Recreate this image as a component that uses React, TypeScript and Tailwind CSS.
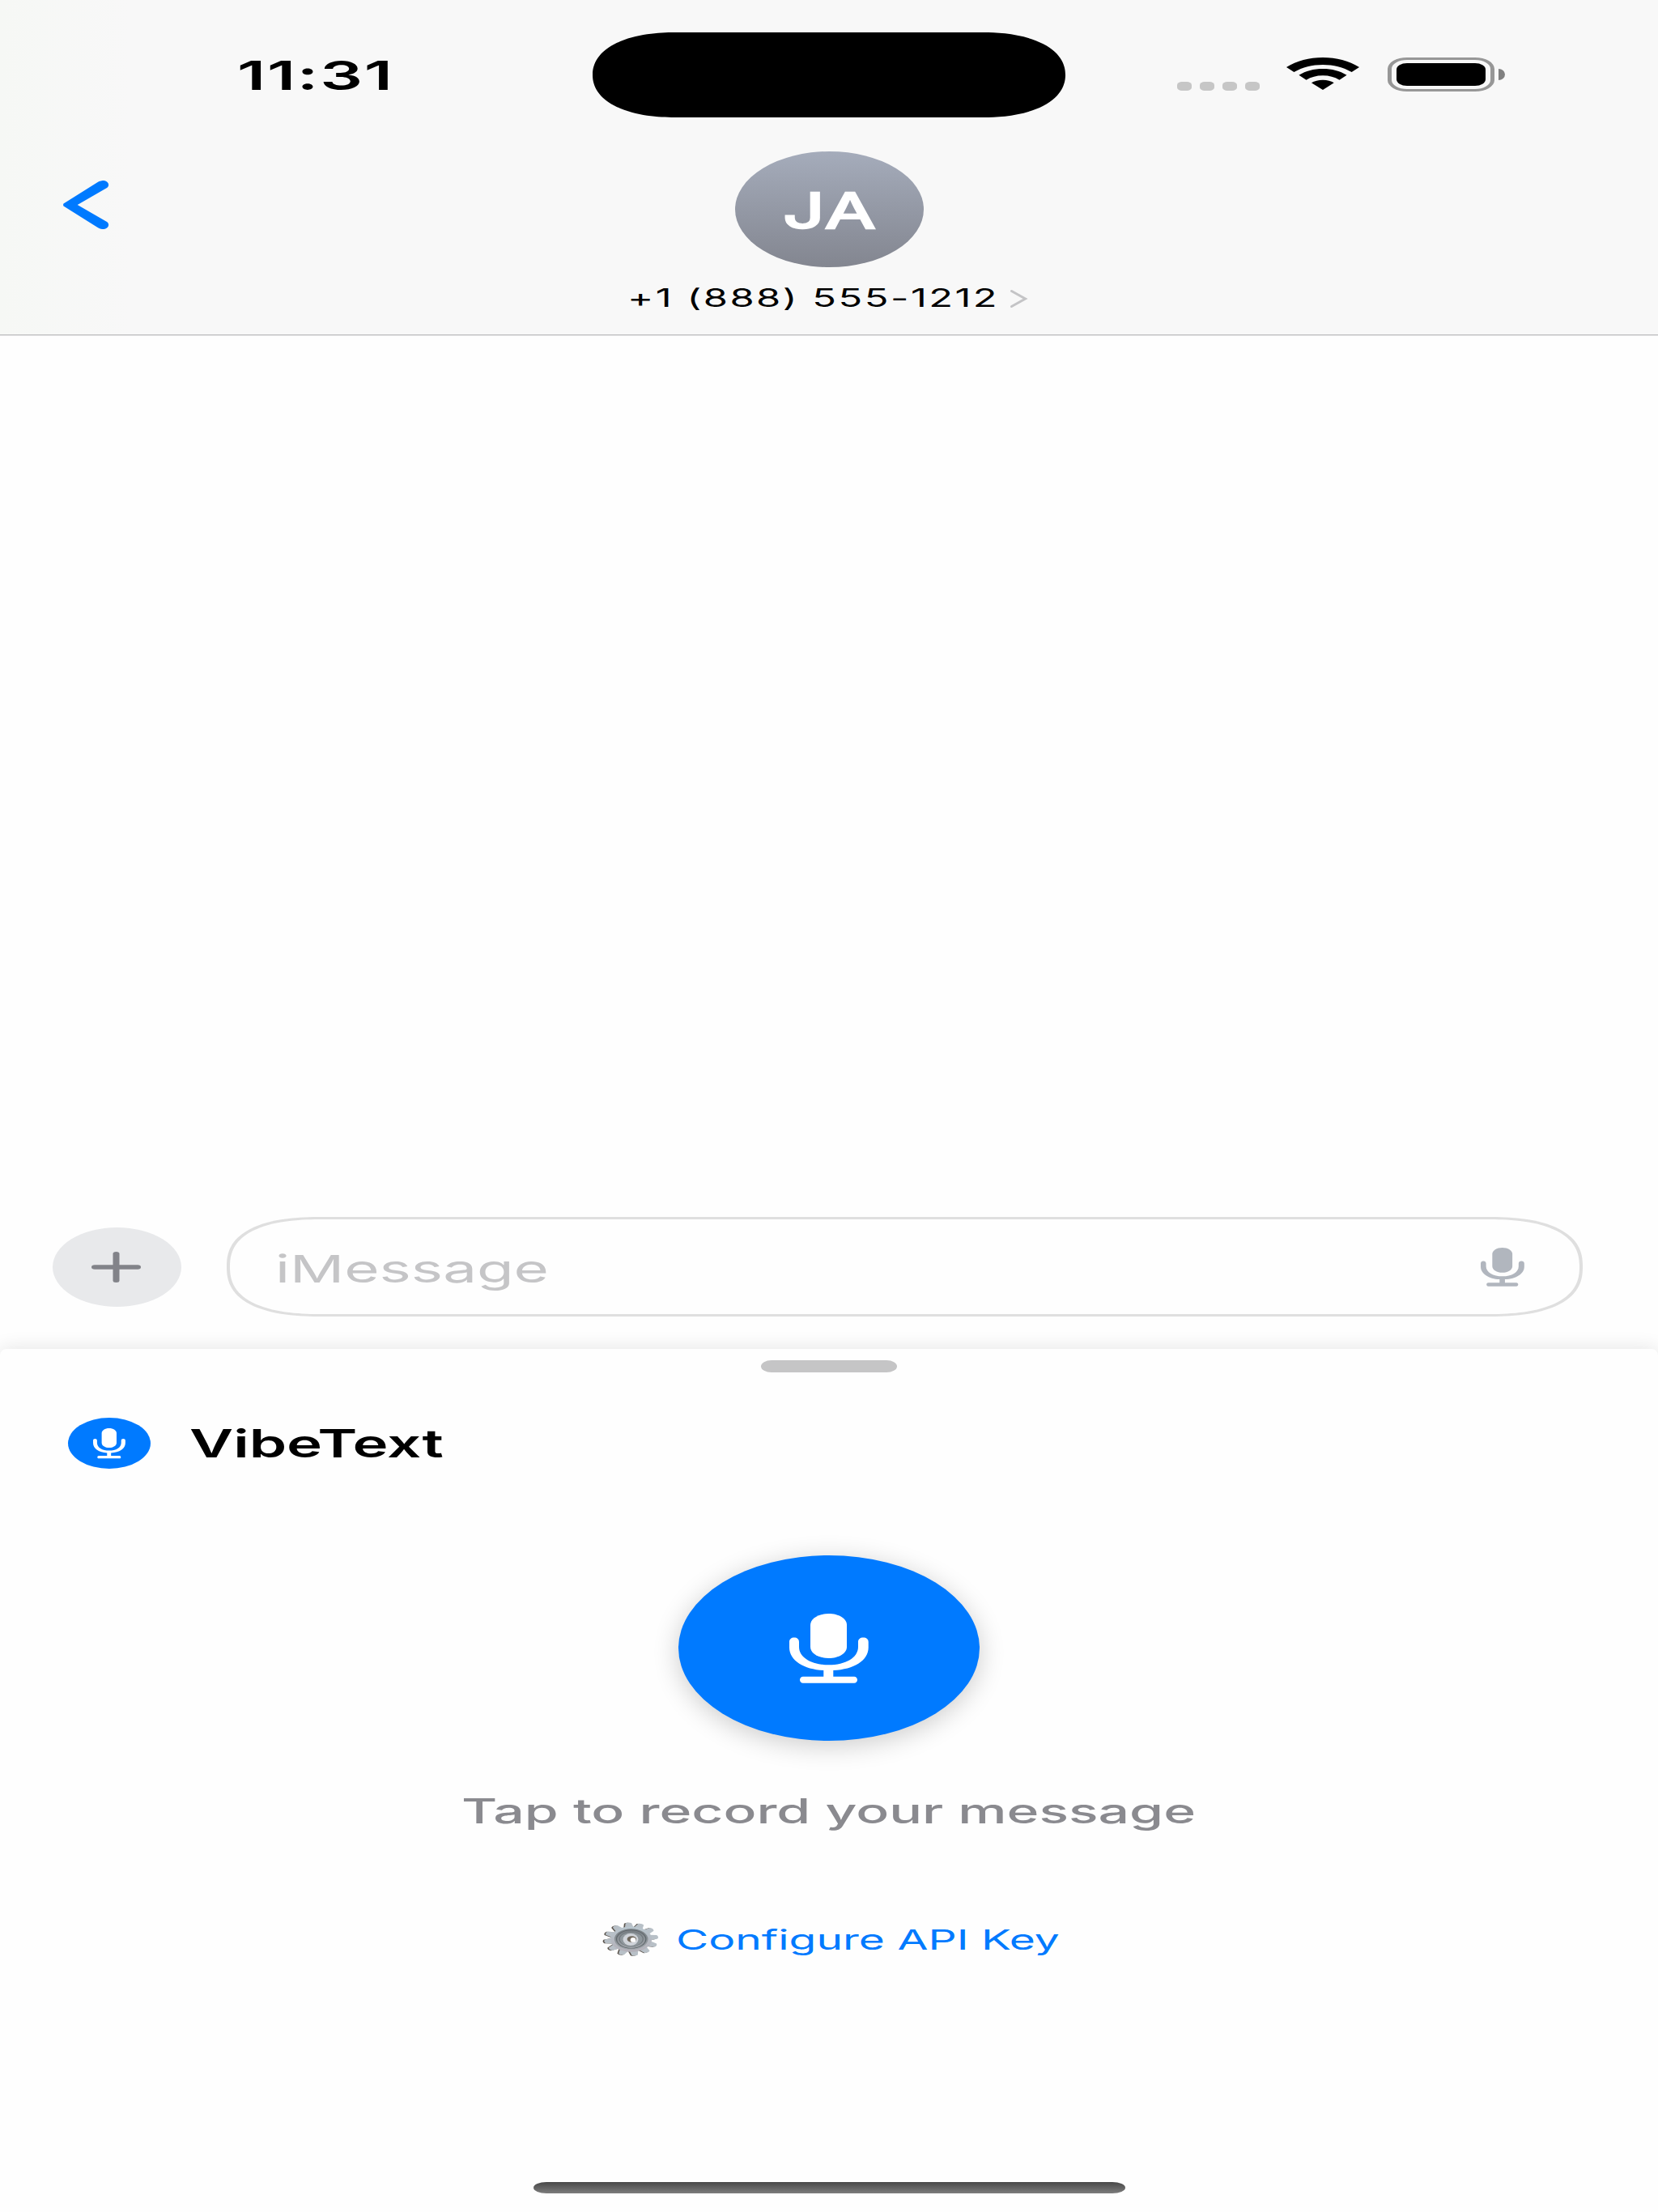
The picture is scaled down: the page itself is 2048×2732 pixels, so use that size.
import type { ReactNode } from "react";

type StretchProps = { box: string; text: string; children: ReactNode };

/** Horizontally extended text: the box reserves the final width, the inner span is scaled. */
function Stretch({ box, text, children }: StretchProps) {
  return (
    <span className={`block shrink-0 whitespace-nowrap ${box}`}>
      <span className={`inline-block origin-left align-top leading-none ${text}`}>{children}</span>
    </span>
  );
}

function MicIcon({ className }: { className: string }) {
  return (
    <svg viewBox="0 0 98 86" preserveAspectRatio="none" fill="currentColor" className={`block ${className}`}>
      <path d="M26 14C26 6 36 0 48.500 0S71 6 71 14V41C71 49 61 55 48.500 55S26 49 26 41Z" />
      <path d="M0 35C0 31.500 2.500 29.600 6 29.600S12 31.500 12 35V41C12 54.500 28 63.300 48.700 63.300S85 54.500 85 41V35C85 31.500 87.500 29.600 91.300 29.600S97.700 31.500 97.700 35V42C97.700 57.500 80 69 54.300 70V77.700H80C82.500 77.700 84 79.500 84 81.700S82.500 85.700 80 85.700H17C14.500 85.700 13 83.900 13 81.700S14.500 77.700 17 77.700H42.300V70C18 69 0 57.500 0 42Z" />
    </svg>
  );
}

function WifiIcon() {
  return (
    <svg viewBox="0 0 268 120" preserveAspectRatio="none" className="mt-[71px] ml-[33.500px] h-[40px] w-[90px]">
      <path d="M0 36C38 12 84 0 134 0S230 12 268 36L240 54C208 36 174 27 134 27S60 36 28 54Z" />
      <path d="M46 65C72 50 100 42 134 42S196 50 222 65L195 83C177 73 158 67 134 67S91 73 73 83Z" />
      <path d="M92 94C104 87 117 83 134 83S163 87 175 94L134 120Z" />
    </svg>
  );
}

function StatusBar() {
  return (
    <div className="grid h-[164px] grid-cols-[732px_584px_1fr] items-start">
      <Stretch box="ml-[295px] mt-[68px] w-[184px] h-[50px]" text="-ml-[2px] scale-x-[1.66] text-[50px] font-semibold tracking-[1.1px]">
        11:31
      </Stretch>
      <div className="mt-[40px] h-[105px] rounded-[101px/52.5px] bg-black [corner-shape:superellipse(1.13)]" />
      <div className="flex items-start pl-[138px]">
        <div className="mt-[101px] flex gap-[10.500px]">
          {[0, 1, 2, 3].map((i) => (
            <span key={i} className="h-[10.500px] w-[17.500px] rounded-[6px/4px] bg-[#c6c6c6]" />
          ))}
        </div>
        <WifiIcon />
        <div className="mt-[71px] ml-[34.500px] h-[41.500px] w-[132px] rounded-[24px/14px] border-x-[5px] border-y-[3px] border-[#979797] px-[6px] py-[4px]">
          <div className="h-full rounded-[13px/8px] bg-black" />
        </div>
        <div className="mt-[85px] ml-[5px] h-[13.500px] w-[8px] rounded-r-[8px_7px] bg-[#808080]" />
      </div>
    </div>
  );
}

function ContactHeader() {
  return (
    <header className="h-[414px] shrink-0 border-b border-[#bfbfc0] bg-[linear-gradient(90deg,#f6f8f5_0px,#f8f8f8_160px)] shadow-[0_1px_0_#e4e4e5]">
      <StatusBar />
      <div className="grid grid-cols-[732px_584px_1fr] items-start">
        <svg viewBox="0 0 58 60" className="mt-[59px] ml-[78px] h-[60px] w-[57px]" preserveAspectRatio="none">
          <path d="M.5 28.500L43 2.300C46 .3 49 0 51.500 0C57 1 59 6 55 9L18 30L55 51C59 54 57 59 51.500 60C49 60 46 59.700 43 57.700L.5 31.500C0 31 0 29 .5 28.500Z" fill="#007aff" />
        </svg>
        <div className="flex flex-col items-center">
          <div className="mt-[23px] flex h-[143px] w-[233px] justify-center rounded-[50%] bg-linear-to-b from-[#a5acbb] to-[#838690]">
            <Stretch
              box="mt-[43px] w-[112px] h-[60px]"
              text="-ml-[1px] scale-x-[1.52] text-[60px] font-normal tracking-[1px] text-white [-webkit-text-stroke:2.4px_white] [stroke-linejoin:round]"
            >
              JA
            </Stretch>
          </div>
          <div className="mt-[23px] flex">
            <Stretch box="w-[451px] h-[31px]" text="-ml-[5px] scale-x-[1.602] text-[30.500px] tracking-[1.55px]">
              +1 (888) 555-1212
            </Stretch>
            <svg viewBox="0 0 21 22" className="mt-[5px] ml-[17px] h-[22px] w-[21px] overflow-visible">
              <path d="M1.500 1.500L18.500 11L1.500 20.500" fill="none" stroke="#c4c4c6" strokeWidth="3" strokeLinecap="round" />
            </svg>
          </div>
        </div>
      </div>
    </header>
  );
}

function Composer() {
  return (
    <div className="flex h-[163px] shrink-0 items-start pl-[65px] pr-[93px]">
      <button className="mt-[13px] flex h-[98px] w-[159px] items-center justify-center rounded-[50%] bg-[#e8e9eb]">
        <svg viewBox="0 0 61 38" className="mr-[2px] h-[38px] w-[61px]" fill="#828389">
          <rect x="26.500" width="8" height="38" rx="4" ry="2.500" />
          <rect y="16.200" width="61" height="5.600" rx="4" ry="2.800" />
        </svg>
      </button>
      <div className="ml-[56px] flex h-[123px] flex-1 items-start justify-between rounded-[118px/61px] border-x-[4.500px] border-y-[3px] border-[#dfdfdf] pl-[60px] pr-[68px] [corner-shape:superellipse(1.3)]">
        <Stretch box="mt-[37px] w-[330px] h-[47px]" text="-ml-[4px] scale-x-[1.583] text-[47px] text-[#c5c5c7]">
          iMessage
        </Stretch>
        <MicIcon className="mt-[35px] h-[48px] w-[54px] text-[#b1b6be]" />
      </div>
    </div>
  );
}

function GearIcon() {
  const teeth = [-6, 22, 52, 82, 112, 142, 172, 202, 232, 262, 292, 322];
  const tooth = "M-8.500 -32L-5.500 -48Q0 -52 5.500 -48L8.500 -32Z";
  return (
    <svg viewBox="0 0 104 104" preserveAspectRatio="none" className="h-[43px] w-[70px]">
      <defs>
        <linearGradient id="gearBody" x1="0" y1="0" x2="0" y2="1">
          <stop offset="0" stopColor="#b9c6ce" />
          <stop offset="1" stopColor="#b3b0b8" />
        </linearGradient>
        <linearGradient id="gearDish" x1="0" y1="0" x2="0" y2="1">
          <stop offset="0" stopColor="#747b80" />
          <stop offset="1" stopColor="#a3a8ad" />
        </linearGradient>
      </defs>
      <g fill="#5b544d" transform="translate(50.500 51.500)">
        {teeth.map((a) => (
          <path key={a} d={tooth} transform={`rotate(${a})`} />
        ))}
      </g>
      <g transform="translate(53 51)">
        <g fill="#b8c0c7">
          {teeth.map((a) => (
            <path key={a} d={tooth} transform={`rotate(${a})`} />
          ))}
        </g>
        <circle r="38" fill="url(#gearBody)" />
        <circle r="31" fill="url(#gearDish)" />
        <circle r="27" fill="none" stroke="#5f666b" strokeWidth="1.800" />
        <circle r="21.500" fill="#8f979c" stroke="#6d7479" strokeWidth="1.500" />
        <ellipse cx="-1" cy="1" rx="14" ry="18" fill="#cfd3d9" />
        <ellipse cx="1" cy="0" rx="8.500" ry="9.500" fill="#6f675c" />
        <ellipse cx="3.500" cy="2" rx="5" ry="7" fill="#fff" />
      </g>
    </svg>
  );
}

function VibeTextSheet() {
  return (
    <section className="flex h-[1066px] shrink-0 flex-col items-center rounded-t-[8px] bg-[#fefefe] shadow-[0_0_24px_rgba(0,0,0,0.11)]">
      <div className="mt-[14px] h-[15px] w-[168px] shrink-0 rounded-[13px/7.500px] bg-[#c5c5c6]" />
      <div className="mt-[56px] flex h-[63px] w-full shrink-0 items-start pl-[84px]">
        <div className="flex h-[63px] w-[102px] justify-center rounded-[50%] bg-[#007aff]">
          <MicIcon className="mt-[13px] h-[37.500px] w-[40px] text-white" />
        </div>
        <Stretch box="ml-[49px] mt-[8px] w-[311px] h-[48px]" text="-ml-[1px] scale-x-[1.567] text-[47.500px] font-semibold">
          VibeText
        </Stretch>
      </div>
      <button className="mt-[107px] flex h-[229px] w-[372px] shrink-0 justify-center rounded-[50%] bg-[#007aff] shadow-[0_6px_32px_rgba(0,0,0,0.2)]">
        <MicIcon className="mt-[72px] ml-[0.500px] h-[86px] w-[98px] text-white" />
      </button>
      <Stretch box="mt-[67px] w-[902px] h-[42px]" text="-ml-[3px] scale-x-[1.628] text-[41.700px] font-medium text-[#8a8a8f]">
        Tap to record your message
      </Stretch>
      <div className="mt-[115px] flex shrink-0 items-start pl-[2px]">
        <GearIcon />
        <Stretch box="ml-[23px] mt-[6px] w-[469px] h-[34px]" text="-ml-[2px] scale-x-[1.645] text-[33.500px] text-[#007aff]">
          Configure API Key
        </Stretch>
      </div>
      <div className="mt-auto mb-[23px] h-[14px] w-[731px] shrink-0 rounded-[16px/7px] bg-linear-to-b from-[#484848] to-[#7d7d7d]" />
    </section>
  );
}

export default function App() {
  return (
    <div className="flex h-[2732px] w-[2048px] flex-col overflow-hidden bg-[#fefefe] font-['Inter',sans-serif] text-black">
      <ContactHeader />
      <main className="flex-1" />
      <Composer />
      <VibeTextSheet />
    </div>
  );
}
